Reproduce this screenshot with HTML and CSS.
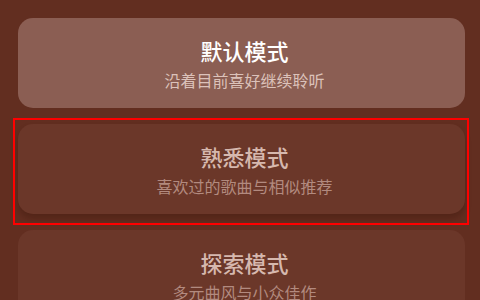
FILE: index.html
```html
<!DOCTYPE html>
<html lang="zh-CN">
<head>
<meta charset="utf-8">
<link rel="stylesheet" href="styles.css">
</head>
<body>
<div class="list">
  <div class="card card-active">
    <div class="title">默认模式</div>
    <div class="sub">沿着目前喜好继续聆听</div>
  </div>
  <div class="card card-focus">
    <div class="title">熟悉模式</div>
    <div class="sub">喜欢过的歌曲与相似推荐</div>
  </div>
  <div class="card">
    <div class="title">探索模式</div>
    <div class="sub">多元曲风与小众佳作</div>
  </div>
</div>
</body>
</html>
```
FILE: styles.css
```css
html, body {
  margin: 0;
  padding: 0;
  background: #622e20;
  width: 480px;
  height: 300px;
  overflow: hidden;
  font-family: "Noto Sans CJK SC", "Noto Sans", sans-serif;
}
.list {
  display: flex;
  flex-direction: column;
  gap: 16px;
  padding: 18px 15px 0 18px;
}
.card {
  position: relative;
  height: 90px;
  flex-shrink: 0;
  border-radius: 15px;
  background: #6b3729;
  display: flex;
  flex-direction: column;
  align-items: center;
  justify-content: center;
  box-sizing: border-box;
  padding-left: 6px;
}
.title {
  font-size: 22px;
  line-height: 30px;
  font-weight: 500;
  color: #d6b8ae;
}
.sub {
  margin-top: 4px;
  font-size: 16px;
  line-height: 22px;
  color: #b28a7f;
}
.card-active {
  background: #8b5e53;
}
.card-active .title {
  color: #ffffff;
}
.card-active .sub {
  color: #dcc2ba;
}
.card-focus {
  box-shadow: 0 5px 6px rgba(40, 10, 0, 0.25);
}
.card-focus::after {
  content: "";
  position: absolute;
  top: -6px;
  right: -4px;
  bottom: -11px;
  left: -5px;
  border: 2px solid #ff0000;
}
```
